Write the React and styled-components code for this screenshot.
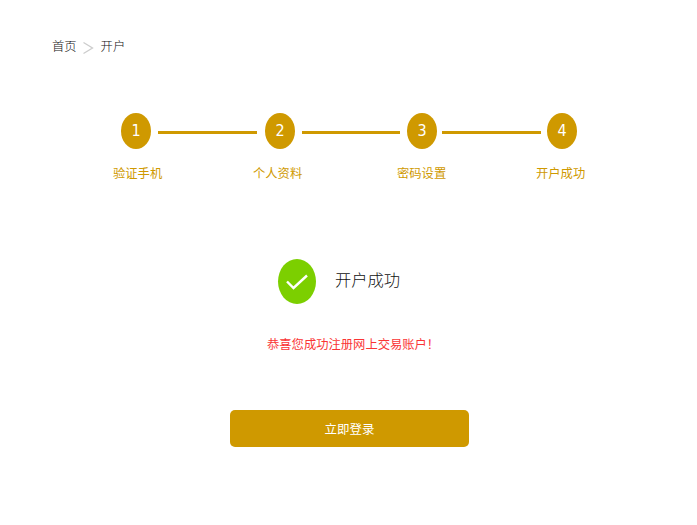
import React from 'react';
import styled, { createGlobalStyle } from 'styled-components';

const GlobalStyle = createGlobalStyle`
  html, body {
    margin: 0;
    padding: 0;
    background: #fff;
  }
  body {
    font-family: "Noto Sans CJK SC", "Open Sans", sans-serif;
    font-size: 12.3px;
    font-weight: 300;
  }
`;

const Page = styled.div`
  width: 697px;
  height: 525px;
  overflow: hidden;
`;

const Breadcrumb = styled.div`
  display: flex;
  align-items: center;
  height: 18px;
  padding: 37px 0 0 52px;
  color: #111;
  line-height: 18px;
`;

const Crumb = styled.span`
  display: block;
`;

const Chevron = styled.svg`
  width: 12px;
  height: 14px;
  margin: 3px 7px 0 5px;
`;

const StepRow = styled.div`
  display: flex;
  align-items: center;
  margin-top: 58px;
  padding-left: 121px;
`;

const Circle = styled.div`
  width: 30px;
  height: 36px;
  border-radius: 50%;
  background: #cf9900;
  color: #fff;
  font-family: "DejaVu Sans Condensed", "DejaVu Sans", sans-serif;
  font-stretch: condensed;
  font-size: 16px;
  font-weight: 300;
  line-height: 36px;
  text-align: center;
`;

const Line = styled.div`
  width: ${(p) => p.$w}px;
  height: 3px;
  margin: 3px ${(p) => p.$after}px 0 ${(p) => p.$before}px;
  background: #cf9900;
`;

const LabelRow = styled.div`
  display: flex;
  margin-top: 14px;
  padding-left: 113px;
`;

const StepLabel = styled.div`
  width: 48px;
  margin-right: ${(p) => p.$gap}px;
  color: #cf9900;
  font-weight: 400;
  line-height: 20px;
  white-space: nowrap;
`;

const Result = styled.div`
  display: flex;
  align-items: center;
  margin-top: 76px;
  padding-left: 278px;
`;

const CheckBadge = styled.div`
  display: flex;
  align-items: center;
  justify-content: center;
  width: 38px;
  height: 45px;
  border-radius: 50%;
  background: #7ccf00;
`;

const CheckMark = styled.svg`
  width: 24px;
  height: 18px;
  margin-right: 1px;
`;

const ResultTitle = styled.div`
  margin: -5px 0 0 19px;
  color: #111;
  font-size: 16.3px;
  line-height: 24px;
`;

const Message = styled.div`
  margin-top: 30px;
  padding-left: 267px;
  color: #fa3535;
  font-weight: 400;
  line-height: 20px;
  white-space: nowrap;
`;

const LoginButton = styled.button`
  display: block;
  width: 239px;
  height: 37px;
  margin: 56px 0 0 230px;
  padding: 0 0 1px;
  border: none;
  border-radius: 5px;
  background: #cf9900;
  color: #fff;
  font-family: inherit;
  font-size: 12.5px;
  font-weight: 400;
  cursor: pointer;
`;

const steps = [
  { label: '验证手机', gap: 92 },
  { label: '个人资料', gap: 96 },
  { label: '密码设置', gap: 91 },
  { label: '开户成功', gap: 0 },
];

const App = () => (
  <Page>
    <GlobalStyle />
    <Breadcrumb>
      <Crumb>首页</Crumb>
      <Chevron viewBox="0 0 12 14">
        <path d="M1.5 1.5 L10.5 7 L1.5 12.5" fill="none" stroke="#ccc" strokeWidth="1.3" />
      </Chevron>
      <Crumb>开户</Crumb>
    </Breadcrumb>

    <StepRow>
      <Circle>1</Circle>
      <Line $w={99} $before={7} $after={8} />
      <Circle>2</Circle>
      <Line $w={98} $before={7} $after={7} />
      <Circle>3</Circle>
      <Line $w={99} $before={5} $after={6} />
      <Circle>4</Circle>
    </StepRow>
    <LabelRow>
      {steps.map((s) => (
        <StepLabel key={s.label} $gap={s.gap}>{s.label}</StepLabel>
      ))}
    </LabelRow>

    <Result>
      <CheckBadge>
        <CheckMark viewBox="0 0 24 18">
          <path d="M2 8.5 L8.5 15 L22 2.5" fill="none" stroke="#fff" strokeWidth="2.4" />
        </CheckMark>
      </CheckBadge>
      <ResultTitle>开户成功</ResultTitle>
    </Result>

    <Message>恭喜您成功注册网上交易账户！</Message>

    <LoginButton>立即登录</LoginButton>
  </Page>
);

export default App;
